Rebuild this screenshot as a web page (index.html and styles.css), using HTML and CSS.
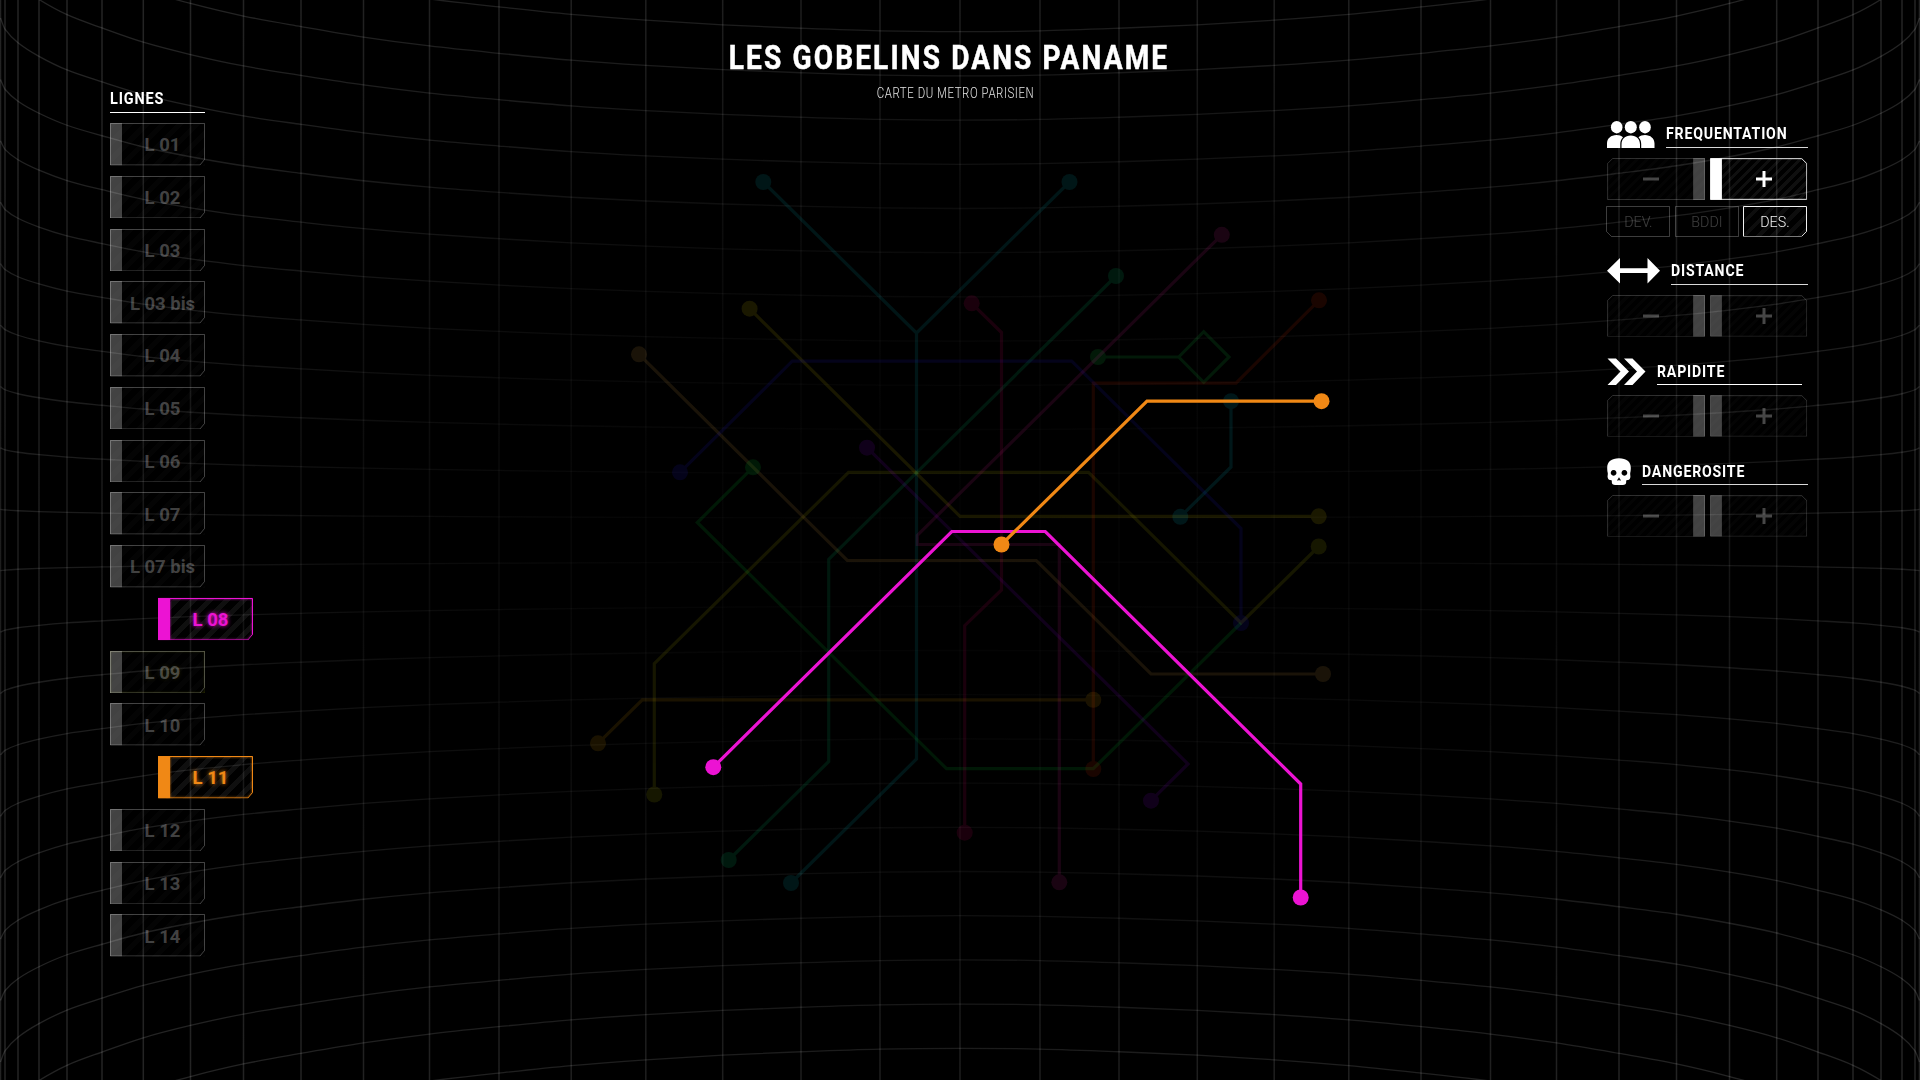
FILE: index.html
```html
<!DOCTYPE html>
<html lang="fr">
<head>
<meta charset="utf-8">
<title>Les Gobelins dans Paname</title>
<link rel="stylesheet" href="styles.css">
</head>
<body>
<svg class="defs" aria-hidden="true">
  <symbol id="frame-line" viewBox="0 0 95 42.5"><path class="edge" d="M.5 .5H94.5V36.5L90 42H.5Z"/><path class="bar" d="M0 0H12V42.5H0Z"/></symbol>
  <symbol id="frame-minus" viewBox="0 0 98 42"><path class="edge" d="M5.5 .5H97.5V41.5H.5V5.5Z"/><path class="bar" d="M86 0H98V42H86Z"/></symbol>
  <symbol id="frame-plus" viewBox="0 0 98 42"><path class="edge" d="M.5 .5H92.5L97.5 5.5V41.5H.5Z"/><path class="bar" d="M0 0H12V42H0Z"/></symbol>
  <symbol id="frame-dev" viewBox="0 0 64 31"><path class="edge" d="M.5 .5H63.5V30.5H5.5L.5 25.5Z"/></symbol>
  <symbol id="frame-bddi" viewBox="0 0 64 31"><path class="edge" d="M.5 .5H63.5V30.5H.5Z"/></symbol>
  <symbol id="frame-des" viewBox="0 0 64 31"><path class="edge" d="M.5 .5H63.5V25.5L58.5 30.5H.5Z"/></symbol>
</svg>

<svg class="backdrop" viewBox="0 0 1920 1080" aria-hidden="true">
  <defs>
    <radialGradient id="fade" gradientUnits="userSpaceOnUse" cx="0" cy="0" r="1" gradientTransform="translate(960 540) scale(1200 680)">
      <stop offset="0" stop-color="#fff" stop-opacity=".01"/>
      <stop offset=".25" stop-color="#fff" stop-opacity=".02"/>
      <stop offset=".5" stop-color="#fff" stop-opacity=".05"/>
      <stop offset=".75" stop-color="#fff" stop-opacity=".11"/>
      <stop offset="1" stop-color="#fff" stop-opacity=".14"/>
    </radialGradient>
  </defs>
  <path id="grid-columns" class="grid-columns"/>
  <path id="grid-rows" class="grid-rows"/>
</svg>

<svg class="map" viewBox="0 0 1920 1080" role="img" aria-label="Carte du metro">
  <g class="route r13"><path d="M763.3 182L916.5 333V759L791 883M1069.5 182L916.5 333"/><circle cx="763.3" cy="182" r="8"/><circle cx="1069.5" cy="182" r="8"/><circle cx="791" cy="883" r="8"/></g>
  <g class="route r4"><path d="M1116 276L828.7 559.3V761.5L728.7 860"/><circle cx="1116" cy="276" r="8"/><circle cx="728.7" cy="860" r="8"/></g>
  <g class="route r3"><path d="M749.6 308.7L960 516.3H1318.7"/><circle cx="749.6" cy="308.7" r="8"/><circle cx="1318.7" cy="516.3" r="8"/></g>
  <g class="route r9"><path d="M654.3 794.5V663.7L848.5 472.3H1088.5L1241 623L1318.7 546.5"/><circle cx="654.3" cy="794.5" r="8"/><circle cx="1318.7" cy="546.5" r="8"/></g>
  <g class="route r1"><path d="M639 354.3L847.3 560.5H1036.3L1151 674H1323"/><circle cx="639" cy="354.3" r="8"/><circle cx="1323" cy="674" r="8"/></g>
  <g class="route r2"><path d="M680 472.3L792.3 361.2H1071.7L1241 528.5V623"/><circle cx="680" cy="472.3" r="8"/><circle cx="1241" cy="623" r="8"/></g>
  <g class="route r6"><path d="M753 467.3L697.3 522.5L946.5 768.7H1093.3L1241 623"/><circle cx="753" cy="467.3" r="8"/></g>
  <g class="route r7b"><path d="M1098 357H1178.7L1203.7 331.7L1229 357L1203.7 382.3L1178.7 357"/><circle cx="1098" cy="357" r="8"/></g>
  <g class="route r5"><path d="M1319 300.3L1236 383.2H1093.3V769"/><circle cx="1319" cy="300.3" r="8"/><circle cx="1093.3" cy="769" r="8"/></g>
  <g class="route r3b"><path d="M1231 401.2V467L1180.3 516.8"/><circle cx="1231" cy="401.2" r="8"/><circle cx="1180.3" cy="516.8" r="8"/></g>
  <g class="route r12"><path d="M971.7 303.3L1001.5 332.5V590L964.7 625.7V832.7"/><circle cx="971.7" cy="303.3" r="8"/><circle cx="964.7" cy="832.7" r="8"/></g>
  <g class="route r7"><path d="M1221.8 234.8L917.3 535.3V544.5H1059.3V882.3"/><circle cx="1221.8" cy="234.8" r="8"/><circle cx="1059.3" cy="882.3" r="8"/></g>
  <g class="route r14"><path d="M867 447.7L1188 764L1151 800.7"/><circle cx="867" cy="447.7" r="8"/><circle cx="1151" cy="800.7" r="8"/></g>
  <g class="route r10"><path d="M598 743.3L642.3 699.8H1093.3"/><circle cx="598" cy="743.3" r="8"/><circle cx="1093.3" cy="699.8" r="8"/></g>
  <g class="route on r8"><path d="M713.3 767.2L951.8 531.5H1045.3L1300.7 784V897.5"/><circle cx="713.3" cy="767.2" r="8"/><circle cx="1300.7" cy="897.5" r="8"/></g>
  <g class="route on r11"><path d="M1321.5 401.2H1147L1001.5 544.5"/><circle cx="1321.5" cy="401.2" r="8"/><circle cx="1001.5" cy="544.5" r="8"/></g>
</svg>

<div class="page">
  <nav class="lines">
    <h2 class="lines-title"><span class="narrow">LIGNES</span></h2>
    <ul class="line-list">
      <li class="line"><svg class="frame"><use href="#frame-line"/></svg><span>L 01</span></li>
      <li class="line"><svg class="frame"><use href="#frame-line"/></svg><span>L 02</span></li>
      <li class="line"><svg class="frame"><use href="#frame-line"/></svg><span>L 03</span></li>
      <li class="line"><svg class="frame"><use href="#frame-line"/></svg><span>L 03 bis</span></li>
      <li class="line"><svg class="frame"><use href="#frame-line"/></svg><span>L 04</span></li>
      <li class="line"><svg class="frame"><use href="#frame-line"/></svg><span>L 05</span></li>
      <li class="line"><svg class="frame"><use href="#frame-line"/></svg><span>L 06</span></li>
      <li class="line"><svg class="frame"><use href="#frame-line"/></svg><span>L 07</span></li>
      <li class="line"><svg class="frame"><use href="#frame-line"/></svg><span>L 07 bis</span></li>
      <li class="line active magenta"><svg class="frame"><use href="#frame-line"/></svg><span>L 08</span></li>
      <li class="line fading"><svg class="frame"><use href="#frame-line"/></svg><span>L 09</span></li>
      <li class="line"><svg class="frame"><use href="#frame-line"/></svg><span>L 10</span></li>
      <li class="line active orange"><svg class="frame"><use href="#frame-line"/></svg><span>L 11</span></li>
      <li class="line"><svg class="frame"><use href="#frame-line"/></svg><span>L 12</span></li>
      <li class="line"><svg class="frame"><use href="#frame-line"/></svg><span>L 13</span></li>
      <li class="line"><svg class="frame"><use href="#frame-line"/></svg><span>L 14</span></li>
    </ul>
  </nav>

  <header class="heading">
    <h1>LES GOBELINS DANS PANAME</h1>
    <p>CARTE DU METRO PARISIEN</p>
  </header>

  <aside class="filters">
    <section class="filter">
      <div class="filter-head">
        <svg class="icon" width="47.5" height="27" viewBox="0 0 47.5 27"><ellipse cx="9.7" cy="6.2" rx="5.8" ry="6.2"/><ellipse cx="38" cy="6.2" rx="5.8" ry="6.2"/><ellipse cx="23.8" cy="6.2" rx="6" ry="6.2"/><path d="M0 27V22.5C0 17.5 4 14 9.5 14C12 14 14.3 14.7 16 16.2C14.2 18 13.3 20.2 13.3 23V27ZM47.5 27V22.5C47.5 17.5 43.5 14 38 14C35.5 14 33.2 14.7 31.5 16.2C33.3 18 34.2 20.2 34.2 23V27ZM14.5 27V23.5C14.5 18 18 14.5 23.8 14.5S33 18 33 23.5V27Z"/></svg>
        <h2><span class="narrow">FREQUENTATION</span></h2>
      </div>
      <div class="steps">
        <div class="step minus"><svg class="frame"><use href="#frame-minus"/></svg><svg class="sign" viewBox="0 0 16 16"><path d="M0 8H16"/></svg></div>
        <div class="step plus on"><svg class="frame"><use href="#frame-plus"/></svg><svg class="sign" viewBox="0 0 16 16"><path d="M0 8H16M8 0V16"/></svg></div>
      </div>
      <div class="chips">
        <div class="chip"><svg class="frame"><use href="#frame-dev"/></svg><span>DEV.</span></div>
        <div class="chip"><svg class="frame"><use href="#frame-bddi"/></svg><span>BDDI</span></div>
        <div class="chip on"><svg class="frame"><use href="#frame-des"/></svg><span>DES.</span></div>
      </div>
    </section>
    <section class="filter">
      <div class="filter-head">
        <svg class="icon" width="53" height="27" viewBox="0 0 53 27"><path d="M0 12.7L13 0V10.3H40.5V0L53 12.7L40.5 25.5V15H13V25.5Z"/></svg>
        <h2><span class="narrow">DISTANCE</span></h2>
      </div>
      <div class="steps">
        <div class="step minus"><svg class="frame"><use href="#frame-minus"/></svg><svg class="sign" viewBox="0 0 16 16"><path d="M0 8H16"/></svg></div>
        <div class="step plus"><svg class="frame"><use href="#frame-plus"/></svg><svg class="sign" viewBox="0 0 16 16"><path d="M0 8H16M8 0V16"/></svg></div>
      </div>
    </section>
    <section class="filter low">
      <div class="filter-head short">
        <svg class="icon" width="39" height="27" viewBox="0 0 39 27"><path d="M.5 .4H9L22 13.4L9 27H.5L13.5 13.4ZM17 .4H25.5L38.5 13.4L25.5 27H17L30 13.4Z"/></svg>
        <h2><span class="narrow">RAPIDITE</span></h2>
      </div>
      <div class="steps">
        <div class="step minus"><svg class="frame"><use href="#frame-minus"/></svg><svg class="sign" viewBox="0 0 16 16"><path d="M0 8H16"/></svg></div>
        <div class="step plus"><svg class="frame"><use href="#frame-plus"/></svg><svg class="sign" viewBox="0 0 16 16"><path d="M0 8H16M8 0V16"/></svg></div>
      </div>
    </section>
    <section class="filter low">
      <div class="filter-head">
        <svg class="icon" width="24" height="27" viewBox="0 0 24 27"><path fill-rule="evenodd" d="M12 .3C4.5 .3 .2 3.7 .2 9.7C.2 12 .4 13.5 .8 15C1 17 .3 18 .7 19.5C1 21.8 2.5 22 4.5 22.2C5.2 22.5 4.5 24 5 25.3C5.3 26.5 6.5 27 8 27H16C17.5 27 18.7 26.5 19 25.3C19.5 24 18.8 22.5 19.5 22.2C21.5 22 23 21.8 23.3 19.5C23.7 18 23 17 23.2 15C23.6 13.5 23.8 12 23.8 9.7C23.8 3.7 19.5 .3 12 .3ZM6.6 12a2.9 2.9 0 1 0 .01 0ZM17.4 12a2.9 2.9 0 1 0 .01 0ZM12 19.3L14 22.6H12.6L12 21.8L11.4 22.6H10Z"/></svg>
        <h2><span class="narrow">DANGEROSITE</span></h2>
      </div>
      <div class="steps">
        <div class="step minus"><svg class="frame"><use href="#frame-minus"/></svg><svg class="sign" viewBox="0 0 16 16"><path d="M0 8H16"/></svg></div>
        <div class="step plus"><svg class="frame"><use href="#frame-plus"/></svg><svg class="sign" viewBox="0 0 16 16"><path d="M0 8H16M8 0V16"/></svg></div>
      </div>
    </section>
  </aside>
</div>
<script src="grid.js"></script>
</body>
</html>
```
FILE: styles.css
```css
* { box-sizing: border-box; margin: 0; padding: 0; }
body { width: 1920px; height: 1080px; overflow: hidden; background: #000; color: #fff; font-family: Roboto, "Liberation Sans", sans-serif; }
.defs { position: absolute; width: 0; height: 0; }
.backdrop, .map { position: absolute; top: 0; left: 0; width: 1920px; height: 1080px; }
.backdrop path { fill: none; stroke: url(#fade); }
.grid-columns { stroke-width: 1.5; }
.grid-rows { stroke-width: 1.3; }

.route { fill: currentColor; opacity: .1; }
.route path { fill: none; stroke: currentColor; stroke-width: 3.2; stroke-miterlimit: 4; }
.route.on { opacity: 1; }
.r1 { color: #ffbc50; } .r2 { color: #2a1eff; } .r3 { color: #fae600; } .r3b { color: #00dcf5; }
.r4 { color: #00f08c; } .r5 { color: #ff3200; } .r6 { color: #00f03c; } .r7 { color: #ff28b4; }
.r7b { color: #14f050; } .r8 { color: #ec13d3; } .r9 { color: #d7dc00; } .r10 { color: #ffb400; }
.r11 { color: #f08815; } .r12 { color: #ff0078; } .r13 { color: #00d2dc; } .r14 { color: #a000ff; }

.page { position: relative; display: grid; grid-template-columns: 400px 1fr 400px; height: 1080px; }
.narrow { display: inline-block; transform: scaleX(.83); transform-origin: left center; letter-spacing: 1px; }

.lines { padding: 88px 0 0 110px; }
.lines-title { width: 95px; height: 25px; border-bottom: 1px solid #fff; font-size: 17px; line-height: 20px; font-weight: 700; }
.lines-title .narrow { transform: scaleX(.85); }
.line-list { list-style: none; padding-top: 10px; display: flex; flex-direction: column; gap: 10.25px; }
.line, .step, .chip { position: relative; display: flex; align-items: center; justify-content: center; }
.frame { position: absolute; left: 0; top: 0; width: 100%; height: 100%; }
.edge { fill: none; stroke: currentColor; stroke-width: 1; }
.bar { fill: var(--bar, currentColor); }
.line { width: 95px; height: 42.5px; padding: 2px 2px 0 12px; color: rgba(255, 255, 255, .26); font-size: 18.5px; font-weight: 700; white-space: nowrap; background: repeating-linear-gradient(135deg, rgba(255, 255, 255, .014) 0 5px, transparent 5px 12px); }
.line.active { margin-left: 48px; background: repeating-linear-gradient(135deg, rgba(255, 255, 255, .06) 0 5px, transparent 5px 12px); clip-path: polygon(0 0, 100% 0, 100% 37px, 90px 100%, 0 100%); }
.line.active span { text-shadow: 0 0 4px currentColor; }
.line.active .frame { filter: drop-shadow(0 0 1px currentColor); }
.line.magenta { color: #ec13d3; }
.line.orange { color: #f08815; }
.line.fading { box-shadow: inset 0 0 3px rgba(110, 120, 0, .45); }
.fading span { text-shadow: 0 0 4px rgba(120, 120, 0, .2); }

.heading { padding-top: 35px; text-align: center; }
.heading h1 { font-size: 33px; line-height: 46px; letter-spacing: 2.5px; font-weight: 700; white-space: nowrap; transform: scaleX(.85); margin-left: -22px; -webkit-text-stroke: .5px #fff; }
.heading p { font-size: 14px; line-height: 20px; padding-top: 2px; letter-spacing: .7px; font-weight: 300; transform: scaleX(.815); margin-left: -9px; color: #e4e4e4; }

.filters { width: 200.5px; margin-left: 87px; padding-top: 121px; display: flex; flex-direction: column; gap: 21px; }
.filter-head { display: flex; align-items: flex-end; gap: 11px; height: 27px; }
.icon { flex: none; fill: #fff; }
.filter-head h2 { flex: 1; min-width: 0; height: 24px; border-bottom: 1px solid #d8d8d8; font-size: 17px; line-height: 19px; font-weight: 700; white-space: nowrap; }
.low .filter-head h2 { line-height: 21px; }
.filter-head.short { padding-right: 6px; }
.filter-head.short h2 { border-color: #fff; }
.steps { display: flex; gap: 5px; padding-top: 10px; }
.step { flex: 1; height: 42px; color: rgba(255, 255, 255, .18); --bar: rgba(255, 255, 255, .26); background: repeating-linear-gradient(135deg, rgba(255, 255, 255, .015) 0 3px, transparent 3px 7px); }
.minus { padding-right: 11px; clip-path: polygon(5px 0, 100% 0, 100% 100%, 0 100%, 0 5px); }
.plus { padding-left: 10px; clip-path: polygon(0 0, 93px 0, 100% 5px, 100% 100%, 0 100%); }
.sign { width: 16px; height: 16px; stroke: rgba(255, 255, 255, .27); stroke-width: 3; }
.step.on { color: #e8e8e8; --bar: #fff; background: repeating-linear-gradient(135deg, rgba(255, 255, 255, .06) 0 3px, transparent 3px 7px); }
.step.on .sign { stroke: #fff; }
.chips { display: flex; gap: 4.5px; margin: 5.5px 0 0 -1px; }
.chip { width: 64px; height: 31px; color: rgba(255, 255, 255, .24); font-size: 15.5px; font-weight: 300; }
.chip span { transform: scaleX(.92); padding-top: 1px; }
.chip.on { color: #f0f0f0; background: repeating-linear-gradient(135deg, rgba(255, 255, 255, .05) 0 4px, transparent 4px 10px); clip-path: polygon(0 0, 100% 0, 100% 26px, 59px 100%, 0 100%); }
```
FILE: grid.js
```js
// Half of the barrel grid: [column x, row spacing at that column], edge to centre.
const half = [
  [0.5, 61.4], [5, 60.1], [18, 58.5], [39, 56.9], [67, 55.3], [102, 53.9], [143.3, 52.4],
  [190.5, 51.1], [243.5, 49.9], [301, 48.9], [363.5, 47.9], [429.5, 47.05], [499, 46.35],
  [571.2, 45.7], [645.8, 45.2], [722.7, 44.8], [801, 44.5], [880, 44.27]
];
const columns = [
  ...half,
  [960, 44.2],
  ...half.slice().reverse().map(([x, s]) => [1920 - x, s])
];

document.getElementById('grid-columns').setAttribute(
  'd', columns.map(([x]) => `M${x} 0V1080`).join('')
);

// Smooth curve through the points (Catmull-Rom turned into cubic segments).
function smooth(points) {
  let d = `M${points[0].join(' ')}`;
  for (let i = 0; i < points.length - 1; i++) {
    const a = points[Math.max(i - 1, 0)], b = points[i];
    const c = points[i + 1], e = points[Math.min(i + 2, points.length - 1)];
    const dx = (c[0] - b[0]) / 3;
    const sb = (c[1] - a[1]) / (c[0] - a[0]);
    const sc = (e[1] - b[1]) / (e[0] - b[0]);
    d += `C${b[0] + dx} ${b[1] + sb * dx} ${c[0] - dx} ${c[1] - sc * dx} ${c[0]} ${c[1]}`;
  }
  return d;
}

let rows = '';
for (let k = -13; k < 13; k++) {
  rows += smooth(columns.map(([x, s]) => [x, 540 + (k + 0.5) * s]));
}
document.getElementById('grid-rows').setAttribute('d', rows);
```
